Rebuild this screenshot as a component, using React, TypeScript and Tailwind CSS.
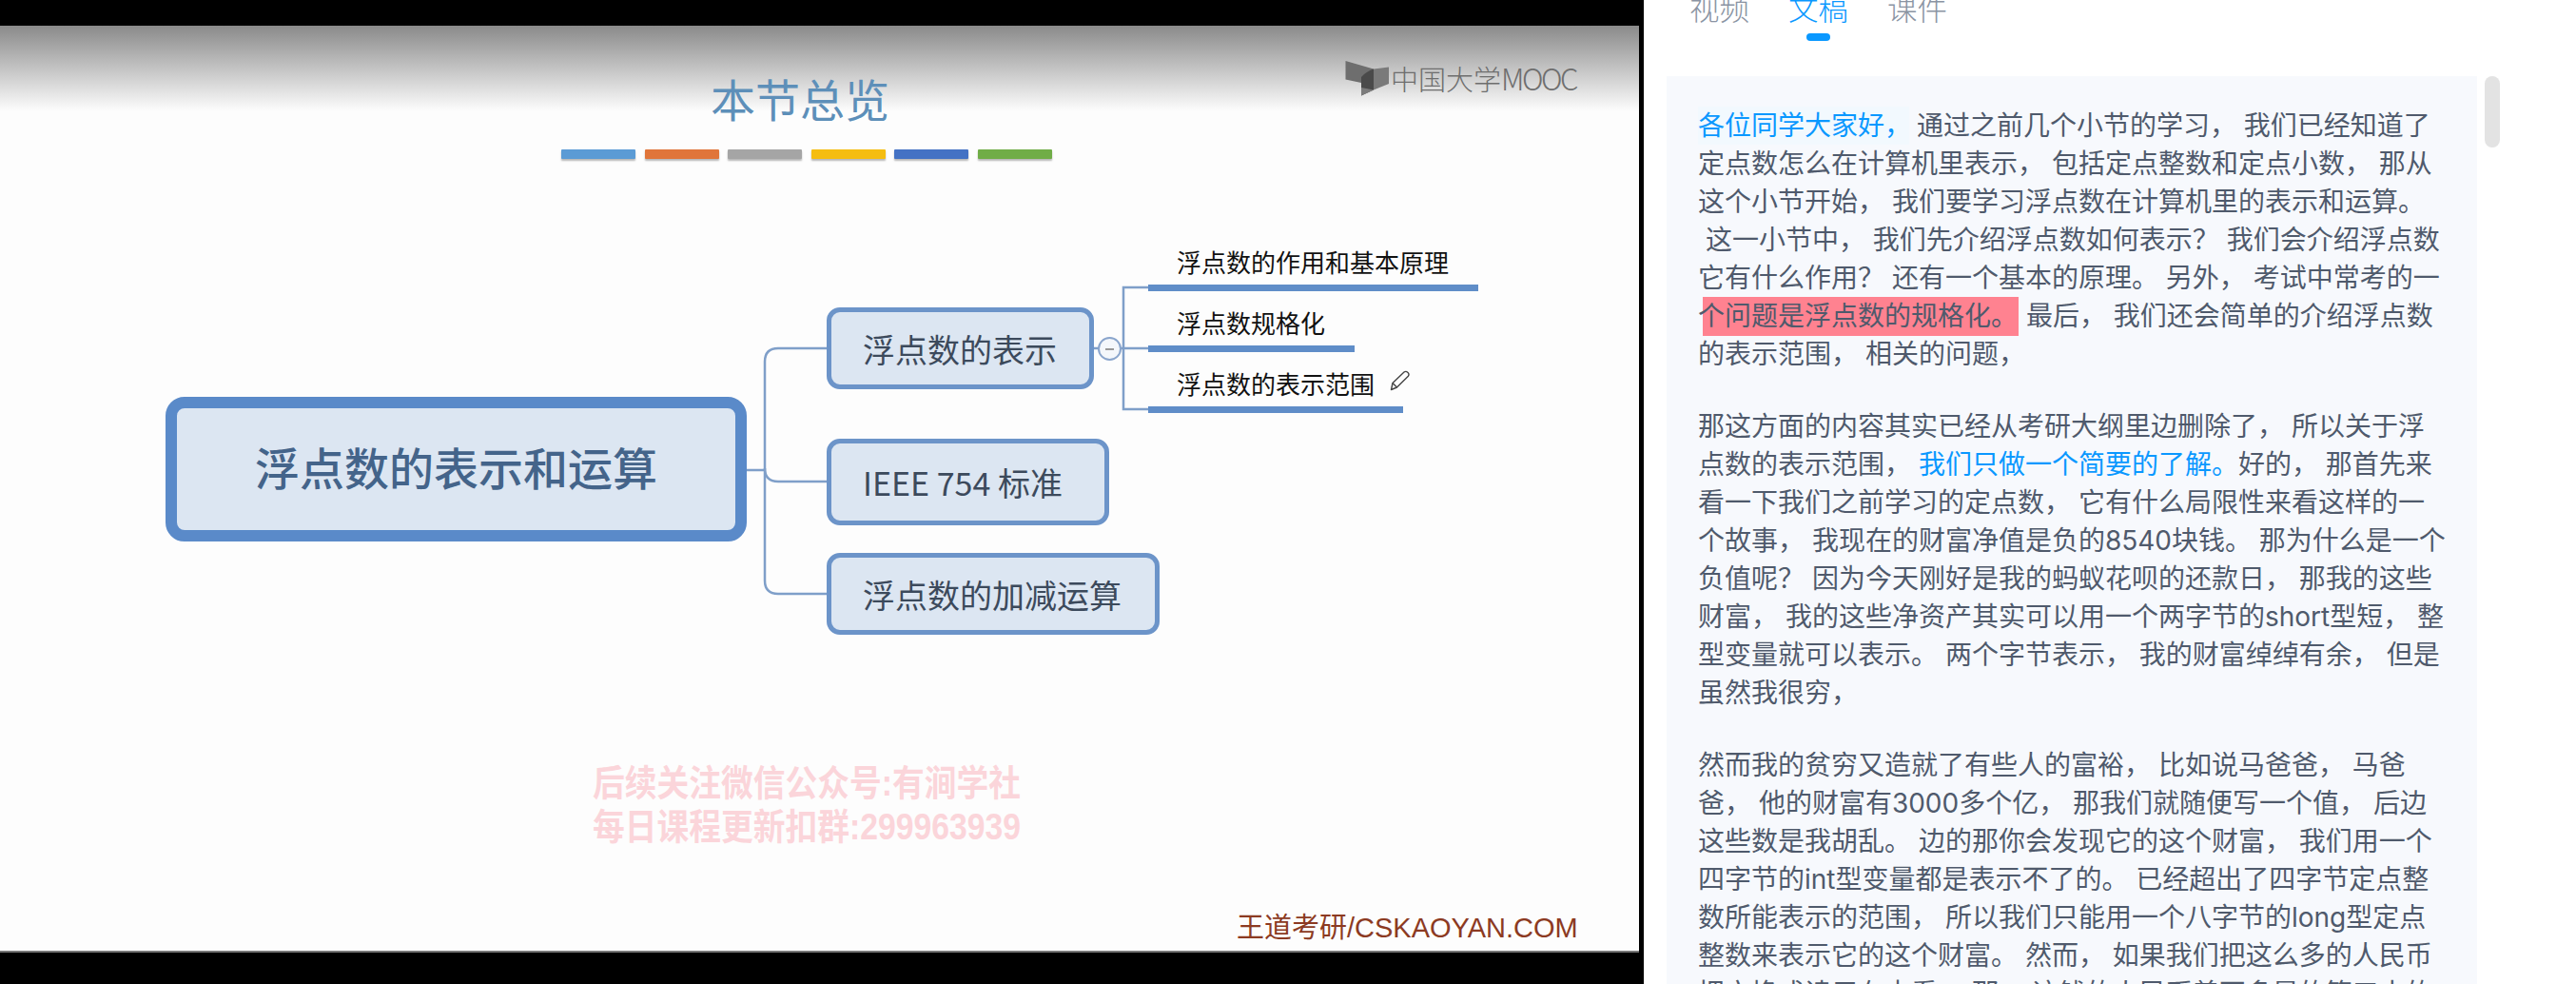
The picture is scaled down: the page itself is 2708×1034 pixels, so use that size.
import React from "react";

const cjk = "font-['Noto_Sans_CJK_SC','Noto_Sans',sans-serif]";
const latinFirst = "font-['Liberation_Sans','Noto_Sans_CJK_SC',sans-serif]";
const panelFont = "font-['Inter','Noto_Sans_CJK_SC',sans-serif]";

type Seg = { text: string; kind?: "blue" | "hello" | "red" };
type Line = string | Seg[];

const paragraphs: Line[][] = [
  [
    [{ text: "各位同学大家好，", kind: "hello" }, { text: " 通过之前几个小节的学习， 我们已经知道了" }],
    "定点数怎么在计算机里表示， 包括定点整数和定点小数， 那从",
    "这个小节开始， 我们要学习浮点数在计算机里的表示和运算。",
    "\u00a0这一小节中， 我们先介绍浮点数如何表示？ 我们会介绍浮点数",
    "它有什么作用？ 还有一个基本的原理。 另外， 考试中常考的一",
    [{ text: "个问题是浮点数的规格化。", kind: "red" }, { text: " 最后， 我们还会简单的介绍浮点数" }],
    "的表示范围， 相关的问题，",
  ],
  [
    "那这方面的内容其实已经从考研大纲里边删除了， 所以关于浮",
    [{ text: "点数的表示范围， " }, { text: "我们只做一个简要的了解。", kind: "blue" }, { text: "好的， 那首先来" }],
    "看一下我们之前学习的定点数， 它有什么局限性来看这样的一",
    "个故事， 我现在的财富净值是负的8540块钱。 那为什么是一个",
    "负值呢？ 因为今天刚好是我的蚂蚁花呗的还款日， 那我的这些",
    "财富， 我的这些净资产其实可以用一个两字节的short型短， 整",
    "型变量就可以表示。 两个字节表示， 我的财富绰绰有余， 但是",
    "虽然我很穷，",
  ],
  [
    "然而我的贫穷又造就了有些人的富裕， 比如说马爸爸， 马爸",
    "爸， 他的财富有3000多个亿， 那我们就随便写一个值， 后边",
    "这些数是我胡乱。 边的那你会发现它的这个财富， 我们用一个",
    "四字节的int型变量都是表示不了的。 已经超出了四字节定点整",
    "数所能表示的范围， 所以我们只能用一个八字节的long型定点",
    "整数来表示它的这个财富。 然而， 如果我们把这么多的人民币",
    "把它换成读用在去看， 那， 这钱的人民币差不多是的等五十的",
  ],
];

const swatches = ["bg-[#5b9bd5]", "bg-[#e0753a]", "bg-[#a5a5a5]", "bg-[#f5bd10]", "bg-[#4472c4]", "bg-[#70ad47]"];

const branches = [
  { label: "浮点数的表示", box: "h-[86px] w-[281px]" },
  { label: "IEEE 754 标准", box: "mt-[52px] h-[91px] w-[297px]" },
  { label: "浮点数的加减运算", box: "mt-[29px] h-[86px] w-[350px]" },
];

const leaves = [
  { label: "浮点数的作用和基本原理", width: "w-[347px]" },
  { label: "浮点数规格化", width: "w-[217px]" },
  { label: "浮点数的表示范围", width: "w-[268px]" },
];

const Transcript = () => (
  <div className="flex flex-col gap-[36px] pt-[32px] pl-[33px]">
    {paragraphs.map((lines, i) => (
      <div key={i} className="flex flex-col">
        {lines.map((line, j) => (
          <div key={j} className="h-[40px] text-[28px] leading-[40px] font-normal whitespace-pre text-[#4f5a6c]">
            {typeof line === "string"
              ? line
              : line.map((seg, k) =>
                  seg.kind === "hello" ? (
                    <span key={k} className="inline-block h-[40px] w-[222px] bg-[#f2f9fe] text-[#0a98ff]">{seg.text}</span>
                  ) : seg.kind === "red" ? (
                    <span key={k} className="inline-block h-[41px] bg-[linear-gradient(#ff8290,#ff8290)] bg-[position:5px_0] bg-no-repeat pr-[1px]">{seg.text}</span>
                  ) : seg.kind === "blue" ? (
                    <span key={k} className="text-[#0a98ff]">{seg.text}</span>
                  ) : (
                    <span key={k}>{seg.text}</span>
                  ),
                )}
          </div>
        ))}
      </div>
    ))}
  </div>
);

const Logo = () => (
  <svg width="48" height="38" viewBox="0 0 48 38" className="shrink-0">
    <path d="M0.5 1 L30 9.5 L30 31.5 L17 24 L0.5 20.5 Z" fill="#6e6e6e" />
    <path d="M30 9.5 L46 7.5 L46 25 L30 31.5 Z" fill="#7a7a7a" />
    <path d="M17 18 Q22 12 30 9.5 L30 31.5 L17 37.5 Z" fill="#4a4a4a" />
    <path d="M17 29 L30 31.5 L17 37.5 Z" fill="#7c7c7c" />
  </svg>
);

const Pencil = () => (
  <svg width="22" height="22" viewBox="0 0 22 22" fill="none" stroke="#444" strokeWidth="1.4" strokeLinejoin="round">
    <path d="M1.5 20.5 L3 13.5 L15 2 Q17 0.6 19 2.4 Q20.8 4.4 19.4 6.2 L7.5 18 Z" />
    <path d="M3 13.5 L7.5 18" />
  </svg>
);

const App = () => {
  return (
    <div className={`flex h-[1034px] w-[2708px] overflow-hidden bg-white ${cjk}`}>
      {/* video */}
      <div className="h-full w-[1728px] shrink-0 bg-black pt-[27px] pr-[5px]">
        <div className="relative h-[974px] border-b-2 border-[#777] bg-[#fdfdfd] bg-[linear-gradient(#8a8a8a,#fdfdfd)] bg-[size:100%_90px] bg-no-repeat pt-[45px] pl-[590px]">
          <div className="pl-[157px] text-[47px] leading-[62px] whitespace-nowrap text-[#5d8fb9]">本节总览</div>
          <div className="mt-[23px] flex gap-[9.5px]">
            {swatches.map((s, i) => (
              <div key={i} className={`h-[10px] w-[78px] rounded-[1px] shadow-[0_2px_2px_rgba(0,0,0,0.28)] ${s}`} />
            ))}
          </div>

          <div className="absolute top-[36px] left-[1414px] flex items-center">
            <Logo />
            <span className="text-[29px] leading-[38px] font-light whitespace-nowrap text-[#6e6e6e]">中国大学</span>
            <span className="text-[31px] leading-[38px] font-light tracking-[-2.5px] whitespace-nowrap text-[#6e6e6e]">MOOC</span>
          </div>

          {/* mind map lines */}
          <svg className="absolute top-0 left-0" width="1723" height="972" fill="none" stroke="#7f9fc9" strokeWidth="2.5">
            <path d="M785 467 L804 467" />
            <path d="M869 339 L818 339 Q804 339 804 353 L804 583 Q804 597 818 597 L869 597" />
            <path d="M804 465 Q804 479 818 479 L869 479" />
            <path d="M1150 339 L1207 339" />
            <path d="M1207 275 L1181 275 L1181 403 L1207 403" />
          </svg>

          {/* root node */}
          <div className="absolute top-[390px] left-[174px] flex h-[152px] w-[611px] items-center justify-center rounded-[20px] border-[12px] border-[#5a8ac9] bg-[#dce6f2] pb-[6px] text-[47px] font-medium text-[#44648a]">
            浮点数的表示和运算
          </div>

          {/* second level */}
          <div className="absolute top-[296px] left-[869px] flex flex-col items-start">
            {branches.map((b) => (
              <div key={b.label} className={`flex items-center rounded-[14px] border-[5px] border-[#6c94c9] bg-[#dce6f2] pl-[33px] text-[34px] whitespace-nowrap text-[#3c4a5c] ${b.box}`}>
                {b.label}
              </div>
            ))}
          </div>

          {/* collapse button */}
          <div className="absolute top-[327px] left-[1154px] flex h-[25px] w-[25px] items-center justify-center rounded-full border-[2.5px] border-[#8aa5cc] bg-[#f4f7fb]">
            <div className="h-[2px] w-[9px] bg-[#999]" />
          </div>

          {/* third level */}
          <div className="absolute top-[229px] left-[1207px] flex flex-col items-start gap-[14px]">
            {leaves.map((l) => (
              <div key={l.label} className={`border-b-[7px] border-[#5f8dc8] pb-[6px] pl-[30px] text-[26px] leading-[37px] font-normal whitespace-nowrap text-[#111] ${l.width}`}>
                {l.label}
              </div>
            ))}
          </div>
          <div className="absolute top-[362px] left-[1461px]">
            <Pencil />
          </div>

          {/* watermark */}
          <div className={`absolute top-[773px] left-[623px] origin-top-left scale-x-[0.888] text-[38px] leading-[46px] font-bold whitespace-nowrap text-[#fbd5da] ${latinFirst}`}>
            <div>后续关注微信公众号:有涧学社</div>
            <div>每日课程更新扣群:299963939</div>
          </div>

          <div className={`absolute top-[930px] left-[1300px] text-[29px] leading-[36px] whitespace-nowrap text-[#8c3a22] ${latinFirst}`}>
            王道考研/CSKAOYAN.COM
          </div>
        </div>
      </div>

      {/* transcript panel */}
      <div className={`flex min-w-0 flex-1 flex-col pl-[24px] ${panelFont}`}>
        <div className="flex h-[80px] gap-[41px] pl-[24px]">
          <div className="-mt-[9px] text-[31.5px] leading-[38px] font-light text-[#8a94a3]">视频</div>
          <div className="relative -mt-[9px] text-[31.5px] leading-[38px] font-light text-[#0a98ff]">
            文稿
            <div className="absolute top-[44px] left-[19px] h-[8px] w-[25px] rounded-full bg-[#0a98ff]" />
          </div>
          <div className="-mt-[9px] text-[31.5px] leading-[38px] font-light text-[#8a94a3]">课件</div>
        </div>
        <div className="flex min-h-0 flex-1 gap-[8px]">
          <div className="w-[852px] overflow-hidden bg-[#f7f9fd]">
            <Transcript />
          </div>
          <div className="h-[75px] w-[16px] rounded-full bg-[#e3e3e3]" />
        </div>
      </div>
    </div>
  );
};

export default App;
